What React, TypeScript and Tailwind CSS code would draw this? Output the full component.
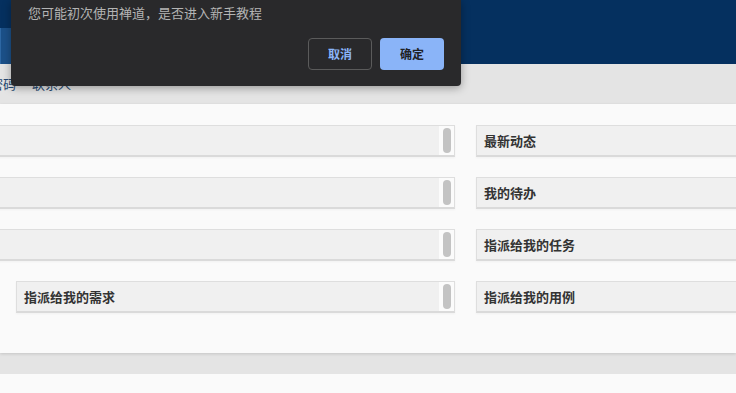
import React from 'react';

const font = { fontFamily: '"Noto Sans CJK SC", "Noto Sans", sans-serif' };

type Block = { title: string; scroll?: boolean; indent?: boolean };

const leftBlocks: Block[] = [
  { title: '', scroll: true },
  { title: '', scroll: true },
  { title: '', scroll: true },
  { title: '指派给我的需求', scroll: true, indent: true },
];

const rightBlocks: Block[] = [
  { title: '最新动态' },
  { title: '我的待办' },
  { title: '指派给我的任务' },
  { title: '指派给我的用例' },
];

function Panel({ block }: { block: Block }) {
  return (
    <div
      className={`h-[32px] flex items-stretch bg-[#f0f0f0] border border-[#dedede] border-b-2 border-b-[#dadada] shadow-[0_1px_2px_rgba(0,0,0,0.04)] ${
        block.indent ? 'ml-[41px]' : ''
      }`}
    >
      <div className="flex-1 flex items-center pl-[7px] text-[13px] font-bold text-[#333]">
        {block.title}
      </div>
      {block.scroll && (
        <div className="w-[15px] bg-[#fbfbfb] flex justify-center pt-[2px]">
          <div className="w-[8px] h-[25px] rounded-full bg-[#c3c3c3]" />
        </div>
      )}
    </div>
  );
}

export default function App() {
  return (
    <div className="relative w-[736px] h-[393px] overflow-hidden bg-[#fafafa]" style={font}>
      {/* Header */}
      <div className="h-16 bg-[#05305f] flex items-end">
        <div className="w-[11px] h-[36px] bg-[#1b5088] border-l border-[#2d67a3]" />
      </div>

      {/* Breadcrumb */}
      <div className="h-10 bg-[#e4e4e4] flex items-center gap-[16px] pl-0 -ml-[10px] text-[13px] text-[#274a72]">
        <span>密码</span>
        <span>联系人</span>
      </div>

      {/* Dashboard */}
      <div className="relative z-10 bg-[#fafafa] pt-[21px] pb-[40px] shadow-[0_1px_3px_rgba(0,0,0,0.14)]">
        <div className="grid grid-cols-[480px_300px] gap-x-[21px] -ml-[25px]">
          <div className="flex flex-col gap-[20px]">
            {leftBlocks.map((b, i) => (
              <Panel key={i} block={b} />
            ))}
          </div>
          <div className="flex flex-col gap-[20px]">
            {rightBlocks.map((b, i) => (
              <Panel key={i} block={b} />
            ))}
          </div>
        </div>
      </div>

      <div className="h-[21px] bg-[#e4e4e4]" />

      {/* Tutorial prompt */}
      <div className="absolute left-[11px] top-0 w-[450px] h-[86px] bg-[#29292b] rounded-b-[4px] shadow-[0_2px_8px_rgba(0,0,0,0.35)] z-20 px-[17px]">
        <div className="pt-[3px] text-[13px] leading-[20px] text-[#b4b4b4]">
          您可能初次使用禅道，是否进入新手教程
        </div>
        <div className="mt-[15px] flex justify-end gap-[8px] pr-0">
          <button className="w-[64px] h-[32px] rounded-[4px] border border-[#5b5b5b] text-[12px] font-bold text-[#8ab4f8]">
            取消
          </button>
          <button className="w-[64px] h-[32px] rounded-[4px] bg-[#8ab4f8] text-[12px] font-bold text-[#202124]">
            确定
          </button>
        </div>
      </div>
    </div>
  );
}
